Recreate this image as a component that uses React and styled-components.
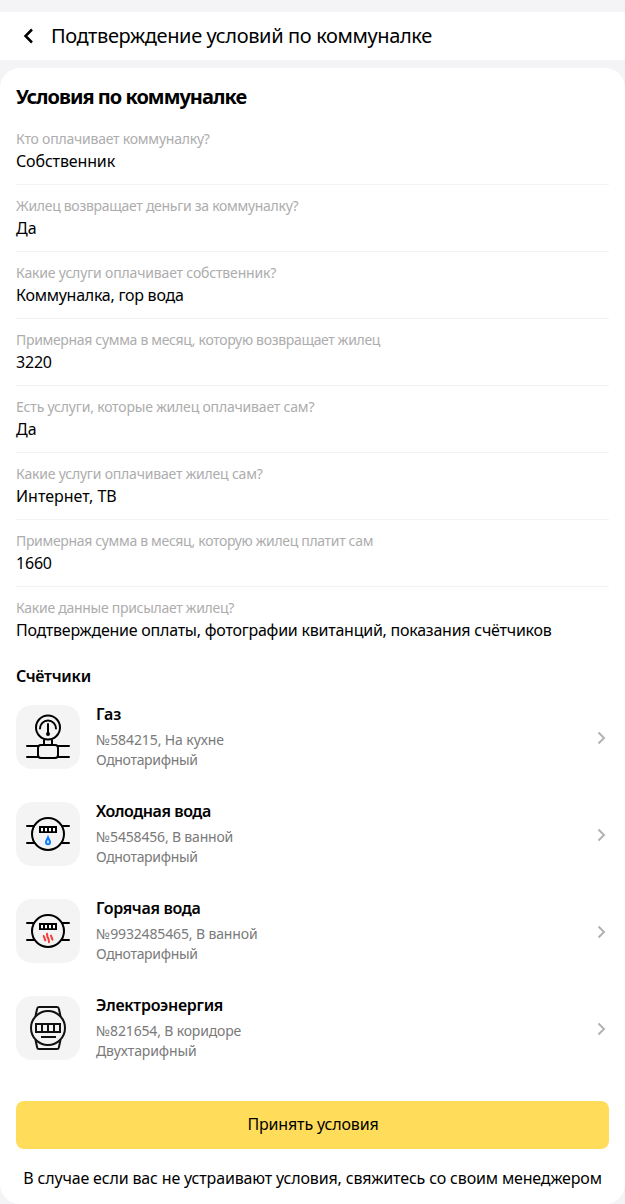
import React from 'react';
import styled, { createGlobalStyle } from 'styled-components';

const GlobalStyle = createGlobalStyle`
  * { box-sizing: border-box; }
  body {
    margin: 0;
    background: #f4f4f6;
    color: #000;
    font-family: "Noto Sans", "Open Sans", sans-serif;
  }
`;

const Page = styled.div`
  width: 100%;
  min-height: 1204px;
  padding-top: 12px;
  display: flex;
  flex-direction: column;
  gap: 8px;
`;

const Header = styled.header`
  height: 48px;
  display: flex;
  align-items: center;
  padding-left: 16px;
  gap: 11px;
  background: #fff;
`;

const BackButton = styled.button`
  width: 24px;
  height: 24px;
  padding: 0;
  border: 0;
  background: none;
  display: flex;
`;

const Line = styled.span`
  display: block;
  white-space: nowrap;
  letter-spacing: ${({ $track = 0 }) => $track}px;
`;

const Title = styled(Line)`
  font-size: 20px;
  line-height: 24px;
`;

const Card = styled.main`
  height: 1136px;
  padding: 16px 16px 0;
  border-radius: 20px;
  background: #fff;
`;

const Heading = styled(Line)`
  font-size: 20px;
  line-height: 26px;
  font-weight: 700;
  margin-bottom: 8px;
`;

const Condition = styled.div`
  height: 67px;
  padding-top: 11px;
  border-bottom: 1px solid #f3f3f4;
  &:last-child { border-bottom-color: transparent; }
`;

const Label = styled(Line)`
  font-size: 14px;
  line-height: 20px;
  margin-bottom: 1px;
  color: #adadad;
`;

const Value = styled(Line)`
  font-size: 16px;
  line-height: 22px;
`;

const Subheading = styled(Line)`
  font-size: 16px;
  line-height: 22px;
  font-weight: 600;
  margin: 11px 0 18px;
`;

const Meters = styled.div`
  display: flex;
  flex-direction: column;
  gap: 33px;
`;

const Meter = styled.div`
  height: 64px;
  display: flex;
  align-items: center;
  gap: 16px;
`;

const Tile = styled.div`
  width: 64px;
  height: 64px;
  flex: none;
  border-radius: 16px;
  background: #f4f4f4;
`;

const MeterText = styled.div`
  flex: 1;
  height: 68px;
`;

const MeterName = styled(Line)`
  font-size: 16px;
  line-height: 22px;
  font-weight: 600;
  margin-bottom: 5px;
`;

const MeterInfo = styled(Line)`
  font-size: 14px;
  line-height: 20px;
  color: #7a7a7a;
`;

const Accept = styled.button`
  width: 100%;
  height: 48px;
  margin-top: 41px;
  padding: 0 0 2px 1px;
  border: 0;
  border-radius: 8px;
  background: #ffdd5a;
  color: #000;
  font: 16px/22px "Noto Sans", "Open Sans", sans-serif;
  display: flex;
  align-items: center;
  justify-content: center;
`;

const Note = styled(Line)`
  margin-top: 18px;
  font-size: 16px;
  line-height: 22px;
  text-align: center;
`;

const Svg = styled.svg`
  display: block;
  flex: none;
`;

const GasIcon = () => (
  <Svg width="64" height="64" viewBox="0 0 64 64" fill="none" stroke="#000" strokeWidth="2" strokeLinecap="round">
    <circle cx="32" cy="22.5" r="12" />
    <path d="M24 23.500a8 8 0 1 1 16 0" />
    <path d="M32 19v9" />
    <circle cx="32" cy="29" r="1" fill="#000" />
    <path d="M28 35v5M36 35v5" />
    <rect x="22" y="40" width="20" height="13" rx="3" />
    <path d="M11 41h11M42 41h11M11 52h11M42 52h11" />
  </Svg>
);

const WaterBase = ({ children }) => (
  <Svg width="64" height="64" viewBox="0 0 64 64" fill="none" stroke="#000" strokeWidth="2" strokeLinecap="round">
    <circle cx="32" cy="32" r="16" />
    <path d="M11 24h7M46 24h7M11 41h7M46 41h7" />
    <path d="M23 24h18v7H23z" fill="#000" stroke="none" />
    <path d="M25 26h2v3.300h-2zM29 26h2v3.300h-2zM33 26h2v3.300h-2zM37 26h2v3.300h-2z" fill="#fff" stroke="none" />
    {children}
  </Svg>
);

const ColdIcon = () => (
  <WaterBase>
    <path d="M32 35.3c-.8 1.8-2 3.2-2 4.900a2 2 0 0 0 4 0c0-1.700-1.200-3.100-2-4.900z" stroke="#0a7cff" />
  </WaterBase>
);

const HotIcon = () => (
  <WaterBase>
    <path d="M27.700 37l1.600 4.300M31 34.800l.5 3.300 1 1.700.5 3.400M35 36.600l1.500 4" stroke="#f93a3a" />
  </WaterBase>
);

const PowerIcon = () => (
  <Svg width="64" height="64" viewBox="0 0 64 64" fill="none" stroke="#111" strokeWidth="2">
    <circle cx="32" cy="32" r="17" />
    <path d="M19.500 20l1.600-7.300a2 2 0 0 1 2-1.700h17.800a2 2 0 0 1 2 1.700L44.500 20M19.500 44l1.600 7.300a2 2 0 0 0 2 1.700h17.800a2 2 0 0 0 2-1.700L44.500 44" />
    <path d="M20 28h24v8H20zM26 28v8M32 28v8M38 28v8M25 41h15" />
  </Svg>
);

const conditions = [
  ['Кто оплачивает коммуналку?', 'Собственник', -0.22, -0.14],
  ['Жилец возвращает деньги за коммуналку?', 'Да', -0.29, 0],
  ['Какие услуги оплачивает собственник?', 'Коммуналка, гор вода', -0.17, -0.26],
  ['Примерная сумма в месяц, которую возвращает жилец', '3220', -0.32, -0.2],
  ['Есть услуги, которые жилец оплачивает сам?', 'Да', -0.19, 0],
  ['Какие услуги оплачивает жилец сам?', 'Интернет, ТВ', -0.2, 0],
  ['Примерная сумма в месяц, которую жилец платит сам', '1660', -0.33, -0.2],
  ['Какие данные присылает жилец?', 'Подтверждение оплаты, фотографии квитанций, показания счётчиков', -0.28, -0.24],
];

const meters = [
  [GasIcon, 'Газ', '№584215, На кухне', 'Однотарифный', 0, -0.1, -0.33],
  [ColdIcon, 'Холодная вода', '№5458456, В ванной', 'Однотарифный', -0.44, -0.18, -0.33],
  [HotIcon, 'Горячая вода', '№9932485465, В ванной', 'Однотарифный', -0.33, -0.14, -0.33],
  [PowerIcon, 'Электроэнергия', '№821654, В коридоре', 'Двухтарифный', -0.29, -0.16, -0.12],
];

export default function App() {
  return (
    <>
      <GlobalStyle />
      <Page>
        <Header>
          <BackButton aria-label="Назад">
            <Svg width="24" height="24" viewBox="0 0 24 24" fill="none" stroke="#000" strokeWidth="2.500">
              <path d="M16 5.500L9.500 12l6.500 6.500" />
            </Svg>
          </BackButton>
          <Title $track={-0.37}>Подтверждение условий по коммуналке</Title>
        </Header>
        <Card>
          <Heading $track={-0.97}>Условия по коммуналке</Heading>
          <div>
            {conditions.map(([label, value, lt, vt]) => (
              <Condition key={label}>
                <Label $track={lt}>{label}</Label>
                <Value $track={vt}>{value}</Value>
              </Condition>
            ))}
          </div>
          <Subheading $track={-0.25}>Счётчики</Subheading>
          <Meters>
            {meters.map(([Icon, name, info, tariff, nt, it, tt]) => (
              <Meter key={name}>
                <Tile><Icon /></Tile>
                <MeterText>
                  <MeterName $track={nt}>{name}</MeterName>
                  <MeterInfo $track={it}>{info}</MeterInfo>
                  <MeterInfo $track={tt}>{tariff}</MeterInfo>
                </MeterText>
                <Svg width="16" height="16" viewBox="0 0 16 16" fill="none" stroke="#b2b2b2" strokeWidth="2">
                  <path d="M5.500 3.500L11 9l-5.500 5.500" />
                </Svg>
              </Meter>
            ))}
          </Meters>
          <Accept><Line $track={-0.15}>Принять условия</Line></Accept>
          <Note $track={-0.16}>В случае если вас не устраивают условия, свяжитесь со своим менеджером</Note>
        </Card>
      </Page>
    </>
  );
}
